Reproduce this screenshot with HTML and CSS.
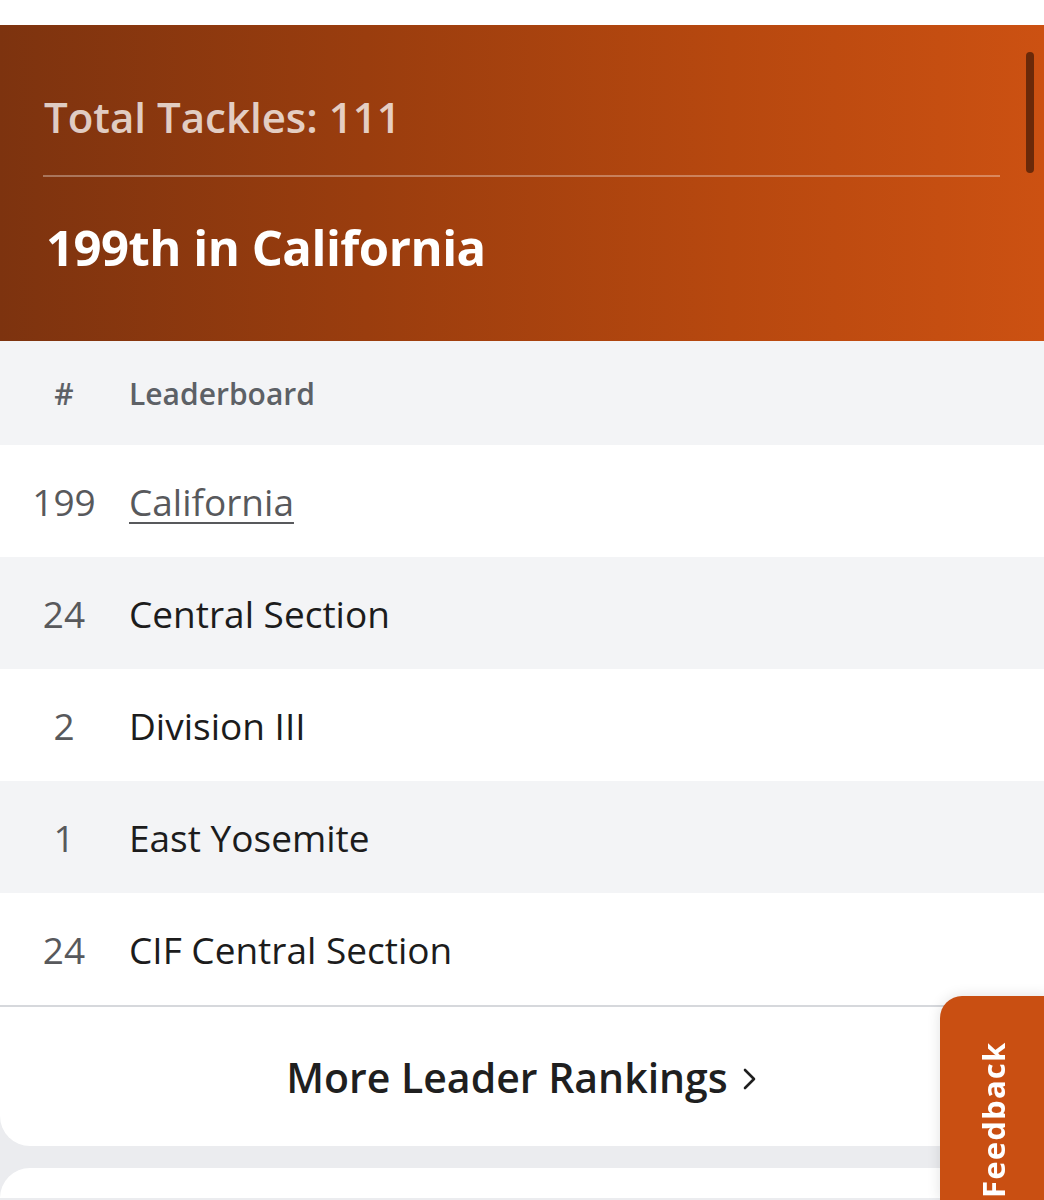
FILE: index.html
```html
<!DOCTYPE html>
<html lang="en">
<head>
    <meta charset="UTF-8">
    <meta name="viewport" content="width=device-width, initial-scale=1.0">
    <title>Total Tackles Leaderboard</title>
    <link rel="stylesheet" href="styles.css">
</head>
<body>
    <div class="page">
        <section class="stat-card">
            <div class="stat-banner">
                <p class="stat-label">Total Tackles: 111</p>
                <hr class="stat-divider">
                <h1 class="stat-rank">199th in California</h1>
                <span class="scroll-thumb"></span>
            </div>

            <div class="board">
                <div class="board-row board-head">
                    <span class="board-num">#</span>
                    <span class="board-name">Leaderboard</span>
                </div>
                <div class="board-row">
                    <span class="board-num">199</span>
                    <a class="board-name board-link" href="#">California</a>
                </div>
                <div class="board-row alt">
                    <span class="board-num">24</span>
                    <span class="board-name">Central Section</span>
                </div>
                <div class="board-row">
                    <span class="board-num">2</span>
                    <span class="board-name">Division III</span>
                </div>
                <div class="board-row alt">
                    <span class="board-num">1</span>
                    <span class="board-name">East Yosemite</span>
                </div>
                <div class="board-row">
                    <span class="board-num">24</span>
                    <span class="board-name">CIF Central Section</span>
                </div>
            </div>

            <a class="more-link" href="#">
                More Leader Rankings
                <svg class="chevron" viewBox="0 0 16 24" width="16" height="24" aria-hidden="true">
                    <path d="M3 3 L12 12 L3 21" fill="none" stroke="#1f1f1f" stroke-width="2.6" stroke-linecap="round" stroke-linejoin="round"/>
                </svg>
            </a>
        </section>

        <section class="next-card"></section>
    </div>

    <button class="feedback-tab">Feedback</button>
</body>
</html>
```

FILE: styles.css
```css
* {
    margin: 0;
    padding: 0;
    box-sizing: border-box;
}

body {
    font-family: 'Open Sans', 'Noto Sans', sans-serif;
    background: #ebecef;
    color: #1c1c1c;
    height: 1200px;
    overflow: hidden;
}

.page {
    padding-top: 25px;
    background: linear-gradient(#fff 0, #fff 25px, transparent 25px);
}

.stat-card {
    background: #fff;
    border-radius: 0 0 30px 30px;
    overflow: hidden;
}

/* orange banner */
.stat-banner {
    position: relative;
    height: 316px;
    padding: 0 44px 0 43px;
    background: linear-gradient(90deg, #7d330f 0%, #9a3d0e 35%, #b7480f 70%, #cc5112 100%);
}

.stat-label {
    padding-top: 60px;
    padding-left: 1px;
    font-size: 42px;
    font-weight: 600;
    line-height: 64px;
    color: rgba(255, 255, 255, 0.76);
}

.stat-divider {
    margin-top: 26px;
    border: none;
    height: 2px;
    background: rgba(255, 255, 255, 0.32);
}

.stat-rank {
    margin-top: 38px;
    padding-left: 3px;
    font-size: 49px;
    font-weight: 700;
    line-height: 64px;
    color: #fff;
    letter-spacing: -0.5px;
}

.scroll-thumb {
    position: absolute;
    top: 27px;
    right: 10px;
    width: 8px;
    height: 121px;
    border-radius: 4px;
    background: #6a2909;
}

/* leaderboard table */
.board {
    border-bottom: 2px solid #d6d8dc;
}

.board-row {
    display: flex;
    align-items: center;
    height: 112px;
    font-size: 37px;
    background: #fff;
}

.board-row.alt {
    background: #f3f4f6;
}

.board-head {
    height: 104px;
    background: #f3f4f6;
    font-size: 30px;
    font-weight: 600;
}

.board-num {
    width: 129px;
    padding-right: 1px;
    text-align: center;
    color: #58595c;
}

.board-name {
    color: #1c1c1c;
}

.board-head .board-num,
.board-head .board-name {
    color: #5d6166;
}

.board-link {
    color: #58595c;
    text-decoration: underline;
    text-decoration-thickness: 2px;
    text-underline-offset: 6px;
}

.more-link {
    display: flex;
    align-items: center;
    justify-content: center;
    gap: 14px;
    height: 139px;
    font-size: 41px;
    font-weight: 600;
    color: #1f1f1f;
    text-decoration: none;
}

.chevron {
    margin-top: 4px;
}

.next-card {
    margin-top: 22px;
    height: 30px;
    background: #fff;
    border-radius: 30px 30px 0 0;
}

/* floating feedback tab */
.feedback-tab {
    position: fixed;
    left: 940px;
    top: 996px;
    width: 110px;
    height: 204px;
    display: flex;
    justify-content: flex-start;
    padding: 2px 32px 0 0;
    border: none;
    border-radius: 0 0 22px 0;
    background: #c94f12;
    box-shadow: 0 0 14px rgba(0, 0, 0, 0.12);
    color: #fff;
    font-family: 'Open Sans', sans-serif;
    font-size: 31px;
    font-weight: 700;
    letter-spacing: 1.2px;
    writing-mode: vertical-rl;
    transform: rotate(180deg);
}
```
